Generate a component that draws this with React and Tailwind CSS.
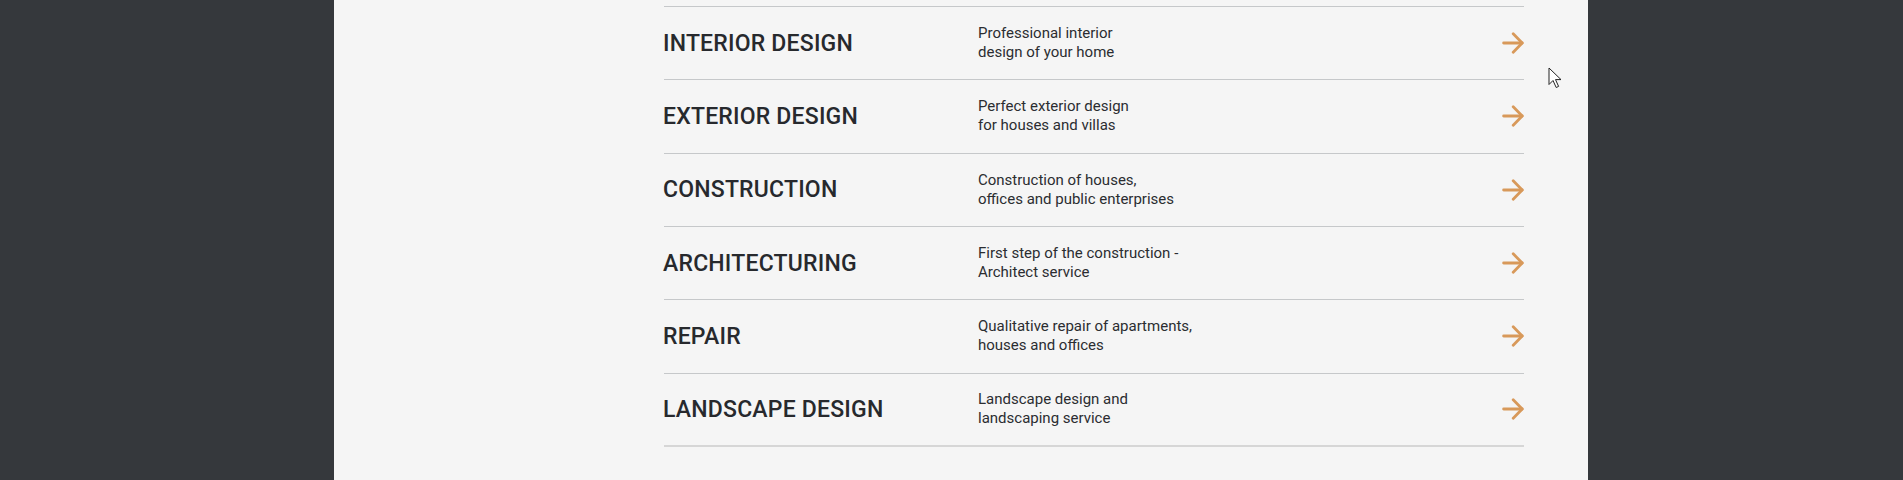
import React from 'react';

const services = [
  { id: 1, title: 'INTERIOR DESIGN', text: ['Professional interior', 'design of your home'] },
  { id: 2, title: 'EXTERIOR DESIGN', text: ['Perfect exterior design', 'for houses and villas'] },
  { id: 3, title: 'CONSTRUCTION', text: ['Construction of houses,', 'offices and public enterprises'] },
  { id: 4, title: 'ARCHITECTURING', text: ['First step of the construction -', 'Architect service'] },
  { id: 5, title: 'REPAIR', text: ['Qualitative repair of apartments,', 'houses and offices'] },
  { id: 6, title: 'LANDSCAPE DESIGN', text: ['Landscape design and', 'landscaping service'] }
];

function Arrow() {
  return (
    <svg width="22" height="22" viewBox="0 0 22 22" fill="none" stroke="#d8995a" strokeWidth="2.8" strokeLinecap="round" strokeLinejoin="round">
      <path d="M1.6 11h18.6" />
      <path d="M11.2 1.8l9 9.2-9 9.2" />
    </svg>
  );
}

function Cursor() {
  return (
    <svg width="14" height="22" viewBox="0 0 14 22" className="absolute left-[1214px] top-[67px]">
      <path d="M1 1v16.5l4-4 3.2 7 2.4-1.1-3.1-6.8H13z" fill="#fff" stroke="#222" strokeWidth="1" strokeLinejoin="round" />
    </svg>
  );
}

export default function App() {
  return (
    <div className="flex h-[480px] overflow-hidden bg-[#35383c] font-[Roboto,sans-serif]">
      <div className="w-[334px] shrink-0"></div>

      <main className="relative w-[1254px] shrink-0 bg-[#f5f5f5] pl-[330px] pr-[64px] pt-[6px]">
        <ul className="border-t border-[#c6c8ca]">
          {services.map((s, i) => (
            <li
              key={s.id}
              className={`flex h-[73.33px] items-center ${
                i === services.length - 1 ? 'border-b-2 border-[#d6d6d6]' : 'border-b border-[#c6c8ca]'
              }`}
            >
              <h3 className="-ml-px w-[315px] shrink-0 text-[23px] font-medium leading-none tracking-[0.2px] text-[#27292d]">
                {s.title}
              </h3>
              <p className="flex-1 text-[15px] leading-[19px] text-[#2b2d31]">
                {s.text[0]}
                <br />
                {s.text[1]}
              </p>
              <Arrow />
            </li>
          ))}
        </ul>
        <Cursor />
      </main>

      <div className="flex-1"></div>
    </div>
  );
}
